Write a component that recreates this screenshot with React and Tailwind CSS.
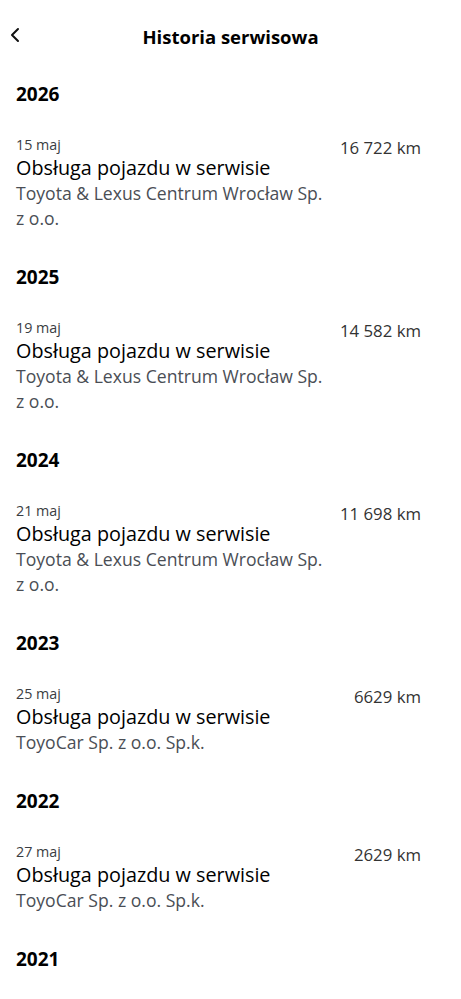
import { ChevronLeft } from 'lucide-react'

const HISTORY = [
  { year: '2026', date: '15 maj', km: '16 722 km', company: 'Toyota & Lexus Centrum Wrocław Sp. z o.o.' },
  { year: '2025', date: '19 maj', km: '14 582 km', company: 'Toyota & Lexus Centrum Wrocław Sp. z o.o.' },
  { year: '2024', date: '21 maj', km: '11 698 km', company: 'Toyota & Lexus Centrum Wrocław Sp. z o.o.' },
  { year: '2023', date: '25 maj', km: '6629 km', company: 'ToyoCar Sp. z o.o. Sp.k.' },
  { year: '2022', date: '27 maj', km: '2629 km', company: 'ToyoCar Sp. z o.o. Sp.k.' },
  { year: '2021', date: '', km: '', company: '' },
]

export default function App() {
  return (
    <div className="w-[461px] h-[999px] overflow-hidden bg-white text-black" style={{ fontFamily: '"Open Sans", "Noto Sans", sans-serif' }}>
      {/* Header */}
      <div className="relative h-[74px] flex items-center justify-center">
        <ChevronLeft size={24} strokeWidth={2} className="absolute left-[3px] top-[23px] text-[#111]" />
        <h1 className="text-[18.5px] font-bold leading-6">Historia serwisowa</h1>
      </div>

      {HISTORY.map(h => (
        <section key={h.year} className="pl-4 pr-10 pt-2 pb-[26px]">
          <h2 className="text-[19px] font-bold leading-6">{h.year}</h2>
          {h.date && (
            <div className="mt-[29px] flex justify-between">
              <div>
                <p className="text-[14.3px] leading-5 text-[#3a3d42]">{h.date}</p>
                <p className="text-[19.8px] leading-[26px]">Obsługa pojazdu w serwisie</p>
                <p className="max-w-[311px] text-[17.6px] leading-[25px] text-[#4a4e55]">{h.company}</p>
              </div>
              <span className="text-[16.8px] leading-5 pt-[3px] text-[#333] whitespace-nowrap">{h.km}</span>
            </div>
          )}
        </section>
      ))}
    </div>
  )
}
